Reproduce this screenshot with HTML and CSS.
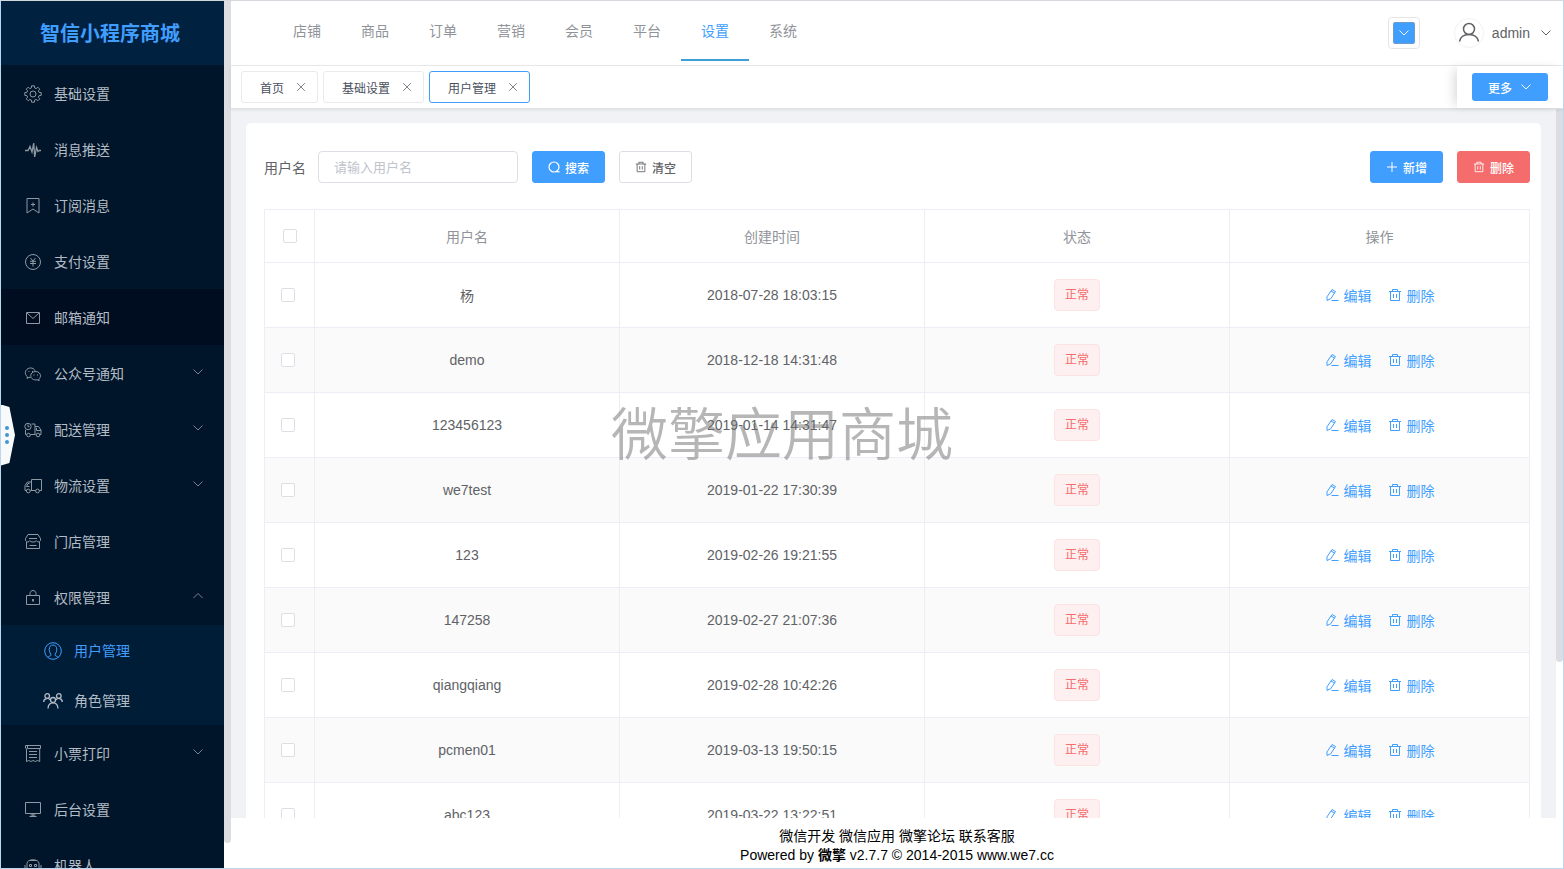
FILE: index.html
```
<!DOCTYPE html>
<html lang="zh-CN">
<head>
    <meta charset="UTF-8">
    <meta name="viewport" content="width=device-width, initial-scale=1.0">
    <title>用户管理 - 智信小程序商城</title>
    <link rel="stylesheet" href="styles.css">
</head>
<body>
    <!-- Icon sprite -->
    <svg class="sprite" aria-hidden="true">
        <symbol id="i-gear" viewBox="0 0 18 18"><path d="M17.2 7.6V10.4L15.1 10.6L14.4 12.2L15.8 13.8L13.8 15.8L12.2 14.4L10.6 15.1L10.4 17.2H7.6L7.4 15.1L5.8 14.4L4.2 15.8L2.2 13.8L3.6 12.2L2.9 10.6L.8 10.4V7.6L2.9 7.4L3.6 5.8L2.2 4.2L4.2 2.2L5.8 3.6L7.4 2.9L7.6 .8H10.4L10.6 2.9L12.2 3.6L13.8 2.2L15.8 4.2L14.4 5.8L15.1 7.4z"/><circle cx="9" cy="9" r="3"/></symbol>
        <symbol id="i-pulse" viewBox="0 0 18 18"><path d="M1 9.500H4L6 5.500 8 11 9.700 2 10.700 16 12.500 6.500 14 10.500 15.300 9.500H17" stroke-width="1.300"/></symbol>
        <symbol id="i-mark" viewBox="0 0 18 18"><path d="M3 1.500h12v14.500l-6-4-6 4zM9 5.500v4M7 7.500h4"/></symbol>
        <symbol id="i-yen" viewBox="0 0 18 18"><circle cx="9" cy="9" r="7.500"/><path d="M6.500 5 9 8l2.500-3M9 8v5.500M6 8.300h6M6 10.500h6"/></symbol>
        <symbol id="i-mail" viewBox="0 0 18 18"><path d="M2.500 3.500h13v11h-13zM3 4l6 5.500L15 4"/></symbol>
        <symbol id="i-wechat" viewBox="0 0 18 18"><path d="M6.500 12.500l-1.500-.2-2 1.200.3-2C.5 9.500 1 6 3 4.300c3-2.500 7.500-1.300 8.300 2.200"/><path d="M11.500 6.500c3 0 5 2 5 4.300 0 1.400-.7 2.400-1.700 3.200l.3 1.700-1.800-.9c-3.500.8-6.600-1.300-6.600-4 0-2.300 2-4.300 4.800-4.300z"/><path d="M4.500 6.500h1M8 6.500h1M9.500 10h1M13 10h1"/></symbol>
        <symbol id="i-delivery" viewBox="0 0 18 18"><circle cx="4" cy="5.500" r="3.200"/><path d="M4 3.500v2.200h1.500M1.500 9v4.500h1M6.500 13.500h5M7.500 3H11v10.500M11 5.500h3.500L17 9v4.500h-1M12.500 7v2.500H17"/><circle cx="4.500" cy="14" r="1.800"/><circle cx="14" cy="14" r="1.800"/></symbol>
        <symbol id="i-truck" viewBox="0 0 18 18"><path d="M7.500 2.500h10v11h-2M7.500 2.500V13.500M11.500 13.500H6.500M7.500 5H3.500L1 8.500v5h1M5.500 6.500H4L2.500 9.500h3"/><circle cx="4.300" cy="14" r="1.900"/><circle cx="13.500" cy="14" r="1.900"/></symbol>
        <symbol id="i-shop" viewBox="0 0 18 18"><path d="M4 1.500h10l2.500 4v2c-1 1.800-3.500 1.800-4.200.2-.8 1.800-5.800 1.800-6.600 0-.7 1.600-3.200 1.600-4.200-.2v-2zM2.500 9v6.500h13V9M5 5.500h8M5.500 12.500h7"/></symbol>
        <symbol id="i-lock" viewBox="0 0 18 18"><path d="M2.500 6.500h13v9h-13zM6 6.500V4.500c0-4 6-4 6 0v2"/><path d="M9 10v2.500" stroke-width="1.800"/></symbol>
        <symbol id="i-user" viewBox="0 0 18 18"><circle cx="9" cy="9" r="8.300"/><path d="M4 15.300c.3-1.300 3-1 3-2.300 0-1-1.800-2.500-1.800-5.500C5.200 4.500 6.800 3 9 3s3.800 1.500 3.800 4.500c0 3-1.800 4.500-1.800 5.500 0 1.300 2.700 1 3 2.300"/></symbol>
        <symbol id="i-group" viewBox="0 0 20 18"><g stroke-width="1.300"><circle cx="4.200" cy="4" r="2.300"/><circle cx="15.800" cy="4" r="2.300"/><circle cx="10" cy="8" r="2.500"/><path d="M.7 10c0-4 5-4.500 6.300-2M19.300 10c0-4-5-4.500-6.300-2M5 16.500c.5-7.500 9.500-7.500 10 0"/></g></symbol>
        <symbol id="i-receipt" viewBox="0 0 18 18"><path d="M1.500 3.500v-3h15v3h-13v-3M2.500 3.500v13l2.200-1 2.200 1 2.200-1 2.200 1 2.200-1 2.200 1v-13M5 6.500h8M5 9.500h8M5 12.500h8"/></symbol>
        <symbol id="i-monitor" viewBox="0 0 18 18"><path d="M1.500 1.500h15v11h-15zM9 12.500v3M5.500 15.500h7M6.500 14h5"/></symbol>
        <symbol id="i-robot" viewBox="0 0 18 18"><path d="M3 6.500c0-5 12-5 12 0v8H3zM1 8v4M17 8v4M5.500 12.500h7M6 3.500h6"/><path d="M5.500 7.500h2v2h-2zM10.500 7.500h2v2h-2z"/></symbol>
        <symbol id="i-down" viewBox="0 0 12 12"><path d="M1.500 3.500 6 8l4.500-4.500"/></symbol>
        <symbol id="i-up" viewBox="0 0 12 12"><path d="M1.500 8 6 3.500 10.500 8"/></symbol>
        <symbol id="i-close" viewBox="0 0 10 10"><path d="M1.200 1.200l7.600 7.600M8.800 1.200 1.200 8.800"/></symbol>
        <symbol id="i-search" viewBox="0 0 12 12"><circle cx="6" cy="6" r="5" stroke-width="1.200"/><path d="M8.500 10.800h3" stroke-width="1.200"/></symbol>
        <symbol id="i-plus" viewBox="0 0 12 12"><path d="M6 1v10M1 6h10"/></symbol>
        <symbol id="i-trash" viewBox="0 0 14 14"><path d="M1 3.500h12M4.500 3.500v-2h5v2M2.500 3.500v9h9v-9M5.500 6v4M8.500 6v4"/></symbol>
        <symbol id="i-edit" viewBox="0 0 14 14"><path d="M2 8.800 7 1.500l3.500 2-4.800 7.300L2 12.500zM6 3l3.500 2M6.500 12.500h7"/></symbol>
        <symbol id="i-avatar" viewBox="0 0 22 22"><g stroke-width="1.500"><circle cx="11" cy="7" r="5.500"/><path d="M1.500 19.500c1-5 4.500-7 9.500-7s8.500 2 9.500 7"/></g></symbol>
    </svg>

    <div class="app">
        <aside class="sidebar">
            <h1 class="logo">智信小程序商城</h1>
            <nav class="menu">
                <a href="#" class="menu-item"><svg class="icon"><use href="#i-gear"/></svg>基础设置</a>
                <a href="#" class="menu-item"><svg class="icon"><use href="#i-pulse"/></svg>消息推送</a>
                <a href="#" class="menu-item"><svg class="icon"><use href="#i-mark"/></svg>订阅消息</a>
                <a href="#" class="menu-item"><svg class="icon"><use href="#i-yen"/></svg>支付设置</a>
                <a href="#" class="menu-item hover"><svg class="icon"><use href="#i-mail"/></svg>邮箱通知</a>
                <button type="button" class="menu-item"><svg class="icon"><use href="#i-wechat"/></svg>公众号通知<svg class="arrow"><use href="#i-down"/></svg></button>
                <button type="button" class="menu-item"><svg class="icon"><use href="#i-delivery"/></svg>配送管理<svg class="arrow"><use href="#i-down"/></svg></button>
                <button type="button" class="menu-item"><svg class="icon"><use href="#i-truck"/></svg>物流设置<svg class="arrow"><use href="#i-down"/></svg></button>
                <a href="#" class="menu-item"><svg class="icon"><use href="#i-shop"/></svg>门店管理</a>
                <button type="button" class="menu-item"><svg class="icon"><use href="#i-lock"/></svg>权限管理<svg class="arrow"><use href="#i-up"/></svg></button>
                <div class="submenu">
                    <a href="#" class="menu-item active"><svg class="icon"><use href="#i-user"/></svg>用户管理</a>
                    <a href="#" class="menu-item"><svg class="icon icon-wide"><use href="#i-group"/></svg>角色管理</a>
                </div>
                <button type="button" class="menu-item"><svg class="icon"><use href="#i-receipt"/></svg>小票打印<svg class="arrow"><use href="#i-down"/></svg></button>
                <a href="#" class="menu-item"><svg class="icon"><use href="#i-monitor"/></svg>后台设置</a>
                <a href="#" class="menu-item"><svg class="icon"><use href="#i-robot"/></svg>机器人</a>
            </nav>
        </aside>
        <div class="side-scroll"></div>

        <div class="main">
            <header class="topbar">
                <nav class="topnav">
                    <a href="#">店铺</a>
                    <a href="#">商品</a>
                    <a href="#">订单</a>
                    <a href="#">营销</a>
                    <a href="#">会员</a>
                    <a href="#">平台</a>
                    <a href="#" class="active">设置</a>
                    <a href="#">系统</a>
                </nav>
                <button type="button" class="theme-picker" aria-label="主题颜色"><span><svg><use href="#i-down"/></svg></span></button>
                <button type="button" class="account">
                    <span class="avatar"><svg><use href="#i-avatar"/></svg></span>
                    admin
                    <svg class="caret"><use href="#i-down"/></svg>
                </button>
            </header>

            <div class="tabs">
                <div class="tab"><a href="#">首页</a><button type="button" aria-label="关闭"><svg><use href="#i-close"/></svg></button></div>
                <div class="tab"><a href="#">基础设置</a><button type="button" aria-label="关闭"><svg><use href="#i-close"/></svg></button></div>
                <div class="tab active"><a href="#">用户管理</a><button type="button" aria-label="关闭"><svg><use href="#i-close"/></svg></button></div>
                <div class="tabs-more">
                    <button type="button" class="more">更多<svg><use href="#i-down"/></svg></button>
                </div>
            </div>

            <div class="content">
                <div class="card-wrap">
                    <section class="card">
                        <form class="toolbar">
                            <label for="username">用户名</label>
                            <input type="text" id="username" placeholder="请输入用户名">
                            <button type="button" class="btn primary"><svg><use href="#i-search"/></svg>搜索</button>
                            <button type="button" class="btn"><svg><use href="#i-trash"/></svg>清空</button>
                            <button type="button" class="btn primary push"><svg><use href="#i-plus"/></svg>新增</button>
                            <button type="button" class="btn danger"><svg><use href="#i-trash"/></svg>删除</button>
                        </form>

                        <table class="grid">
                            <colgroup>
                                <col class="col-check">
                                <col>
                                <col>
                                <col>
                                <col class="col-action">
                            </colgroup>
                            <thead>
                                <tr>
                                    <th><input type="checkbox" aria-label="全选"></th>
                                    <th>用户名</th>
                                    <th>创建时间</th>
                                    <th>状态</th>
                                    <th>操作</th>
                                </tr>
                            </thead>
                            <tbody>
                                <tr>
                                    <td><input type="checkbox" aria-label="杨"></td>
                                    <td>杨</td>
                                    <td>2018-07-28 18:03:15</td>
                                    <td><span class="tag">正常</span></td>
                                    <td><div class="actions"><button type="button"><svg><use href="#i-edit"/></svg>编辑</button><button type="button"><svg><use href="#i-trash"/></svg>删除</button></div></td>
                                </tr>
                                <tr>
                                    <td><input type="checkbox" aria-label="demo"></td>
                                    <td>demo</td>
                                    <td>2018-12-18 14:31:48</td>
                                    <td><span class="tag">正常</span></td>
                                    <td><div class="actions"><button type="button"><svg><use href="#i-edit"/></svg>编辑</button><button type="button"><svg><use href="#i-trash"/></svg>删除</button></div></td>
                                </tr>
                                <tr>
                                    <td><input type="checkbox" aria-label="123456123"></td>
                                    <td>123456123</td>
                                    <td>2019-01-14 14:31:47</td>
                                    <td><span class="tag">正常</span></td>
                                    <td><div class="actions"><button type="button"><svg><use href="#i-edit"/></svg>编辑</button><button type="button"><svg><use href="#i-trash"/></svg>删除</button></div></td>
                                </tr>
                                <tr>
                                    <td><input type="checkbox" aria-label="we7test"></td>
                                    <td>we7test</td>
                                    <td>2019-01-22 17:30:39</td>
                                    <td><span class="tag">正常</span></td>
                                    <td><div class="actions"><button type="button"><svg><use href="#i-edit"/></svg>编辑</button><button type="button"><svg><use href="#i-trash"/></svg>删除</button></div></td>
                                </tr>
                                <tr>
                                    <td><input type="checkbox" aria-label="123"></td>
                                    <td>123</td>
                                    <td>2019-02-26 19:21:55</td>
                                    <td><span class="tag">正常</span></td>
                                    <td><div class="actions"><button type="button"><svg><use href="#i-edit"/></svg>编辑</button><button type="button"><svg><use href="#i-trash"/></svg>删除</button></div></td>
                                </tr>
                                <tr>
                                    <td><input type="checkbox" aria-label="147258"></td>
                                    <td>147258</td>
                                    <td>2019-02-27 21:07:36</td>
                                    <td><span class="tag">正常</span></td>
                                    <td><div class="actions"><button type="button"><svg><use href="#i-edit"/></svg>编辑</button><button type="button"><svg><use href="#i-trash"/></svg>删除</button></div></td>
                                </tr>
                                <tr>
                                    <td><input type="checkbox" aria-label="qiangqiang"></td>
                                    <td>qiangqiang</td>
                                    <td>2019-02-28 10:42:26</td>
                                    <td><span class="tag">正常</span></td>
                                    <td><div class="actions"><button type="button"><svg><use href="#i-edit"/></svg>编辑</button><button type="button"><svg><use href="#i-trash"/></svg>删除</button></div></td>
                                </tr>
                                <tr>
                                    <td><input type="checkbox" aria-label="pcmen01"></td>
                                    <td>pcmen01</td>
                                    <td>2019-03-13 19:50:15</td>
                                    <td><span class="tag">正常</span></td>
                                    <td><div class="actions"><button type="button"><svg><use href="#i-edit"/></svg>编辑</button><button type="button"><svg><use href="#i-trash"/></svg>删除</button></div></td>
                                </tr>
                                <tr>
                                    <td><input type="checkbox" aria-label="abc123"></td>
                                    <td>abc123</td>
                                    <td>2019-03-22 13:22:51</td>
                                    <td><span class="tag">正常</span></td>
                                    <td><div class="actions"><button type="button"><svg><use href="#i-edit"/></svg>编辑</button><button type="button"><svg><use href="#i-trash"/></svg>删除</button></div></td>
                                </tr>
                            </tbody>
                        </table>
                    </section>
                </div>
                <div class="content-scroll"></div>
            </div>

            <footer class="footer">
                <p><a href="#">微信开发</a> <a href="#">微信应用</a> <a href="#">微擎论坛</a> <a href="#">联系客服</a></p>
                <p>Powered by <b>微擎</b> v2.7.7 © 2014-2015 www.we7.cc</p>
            </footer>
        </div>
    </div>

    <!-- Drawer handle on the window edge -->
    <button type="button" class="handle" aria-label="展开"><i></i><i></i><i></i></button>
    <div class="watermark">微擎应用商城</div>
</body>
</html>
```
FILE: styles.css
```
* {
    margin: 0;
    padding: 0;
    box-sizing: border-box;
}

body {
    font-family: "Liberation Sans", "Noto Sans CJK SC", sans-serif;
    font-size: 14px;
    color: #606266;
    background: #fff;
}

a {
    color: inherit;
    text-decoration: none;
}

button {
    font: inherit;
    color: inherit;
    background: none;
    border: 0;
    cursor: pointer;
}

svg {
    fill: none;
    stroke: currentColor;
    stroke-width: 1;
    flex: none;
}

.sprite {
    display: none;
}

.app {
    display: flex;
    height: 100vh;
    border: 1px solid #b9d7ef;
    border-top-color: #d4d8dc;
    overflow: hidden;
}

/* Sidebar */
.sidebar {
    flex: none;
    width: 223px;
    background: #001529;
    color: #b3bcc5;
    overflow: hidden;
}

.logo {
    height: 64px;
    line-height: 66px;
    padding-right: 5px;
    text-align: center;
    font-size: 20px;
    font-weight: 700;
    color: #409eff;
    background: #002140;
}

.menu-item {
    display: flex;
    align-items: center;
    width: 100%;
    height: 56px;
    padding: 0 20px 0 23px;
    text-align: left;
}

.menu-item.hover {
    background: #000c20;
}

.icon {
    width: 18px;
    height: 18px;
    margin: 2px 12px 0 0;
    color: #8e99a4;
}

.icon-wide {
    width: 20px;
    margin: 2px 11px 0 -1px;
    color: #b3bcc5;
}

.arrow {
    width: 12px;
    height: 12px;
    margin: 0 0 2px auto;
    color: #77828e;
}

.submenu {
    background: #001d38;
}

.submenu .menu-item {
    height: 50px;
    padding-left: 43px;
}

.menu-item.active,
.menu-item.active .icon {
    color: #409eff;
}

.side-scroll {
    flex: none;
    width: 7px;
    margin-bottom: 25px;
    background: #dcdde0;
    border-radius: 0 0 4px 4px;
}

.main {
    flex: 1;
    min-width: 0;
    display: flex;
    flex-direction: column;
}

/* Top navigation */
.topbar {
    flex: none;
    display: flex;
    align-items: center;
    height: 65px;
    padding: 0 11px 0 42px;
    border-bottom: 1px solid #e8eaec;
}

.topnav {
    display: flex;
    align-self: flex-start;
    margin-right: auto;
    color: #909399;
}

.topnav a {
    height: 60px;
    line-height: 60px;
    padding: 0 20px;
}

.topnav a.active {
    color: #409eff;
    border-bottom: 2px solid #3f9fd8;
}

.theme-picker {
    width: 32px;
    height: 32px;
    padding: 4px;
    border: 1px solid #e6e6e6;
    border-radius: 4px;
    margin-right: 34px;
}

.theme-picker span {
    display: flex;
    align-items: center;
    justify-content: center;
    height: 22px;
    background: #409eff;
    border: 1px solid #6b9ccc;
    border-radius: 2px;
    color: #fff;
}

.theme-picker svg,
.more svg {
    width: 12px;
    height: 12px;
}

.account {
    display: flex;
    align-items: center;
}

.avatar {
    display: flex;
    align-items: center;
    justify-content: center;
    width: 30px;
    height: 30px;
    margin-right: 8px;
    border: 1px solid #f2f2f2;
    border-radius: 50%;
}

.avatar svg {
    width: 22px;
    height: 22px;
}

.caret {
    width: 12px;
    height: 12px;
    margin-left: 10px;
}

/* Page tabs */
.tabs {
    flex: none;
    position: relative;
    display: flex;
    align-items: center;
    gap: 5px;
    height: 43px;
    padding-left: 10px;
    font-size: 12px;
    color: #495060;
    border-bottom: 1px solid #dfe2e5;
    box-shadow: 0 1px 3px rgba(0, 0, 0, 0.08);
}

.tab {
    display: flex;
    align-items: center;
    gap: 12px;
    height: 32px;
    padding: 0 11px 0 18px;
    border: 1px solid #e8eaec;
    border-radius: 3px;
}

.tab.active {
    border-color: #409eff;
}

.tab button,
.tab svg {
    display: block;
    width: 10px;
    height: 10px;
}

.tab button {
    color: #80848f;
}

.tabs-more {
    display: flex;
    align-items: center;
    height: 100%;
    margin-left: auto;
    padding: 0 15px;
    background: #fff;
    box-shadow: -6px 0 10px -3px rgba(0, 0, 0, 0.14);
}

.more {
    display: flex;
    align-items: center;
    gap: 8px;
    height: 28px;
    padding: 0 16px;
    font-weight: 500;
    color: #fff;
    background: #409eff;
    border-radius: 3px;
}

/* Content */
.content {
    flex: 1;
    min-height: 0;
    display: flex;
    overflow: hidden;
}

.card-wrap {
    flex: 1;
    min-width: 0;
    padding: 14px 15px;
    background: #f0f2f5;
}

.card {
    padding: 28px 11px 28px 18px;
    background: #fff;
    border-radius: 5px;
}

.content-scroll {
    flex: none;
    width: 7px;
    height: 78%;
    background: #dcdde0;
    border-radius: 0 0 4px 4px;
}

.toolbar {
    display: flex;
    align-items: center;
    gap: 14px;
    margin-bottom: 26px;
}

.toolbar label {
    margin-right: -2px;
}

.toolbar input {
    width: 200px;
    height: 32px;
    padding: 0 15px;
    font: inherit;
    font-size: 13px;
    border: 1px solid #dcdfe6;
    border-radius: 4px;
}

.toolbar input::placeholder {
    color: #c0c4cc;
}

.btn {
    display: flex;
    align-items: center;
    gap: 5px;
    height: 32px;
    padding: 0 15px;
    font-size: 12px;
    font-weight: 500;
    border: 1px solid #dcdfe6;
    border-radius: 3px;
}

.btn svg {
    width: 12px;
    height: 12px;
}

.btn.primary {
    color: #fff;
    background: #409eff;
    border-color: #409eff;
}

.btn.danger {
    color: #fff;
    background: #f56c6c;
    border-color: #f56c6c;
}

.btn.push {
    margin-left: auto;
}

/* Data table */
.grid {
    width: 100%;
    table-layout: fixed;
    border-collapse: collapse;
}

.col-check {
    width: 50px;
}

.col-action {
    width: 300px;
}

.grid th,
.grid td {
    border: 1px solid #ebeef5;
    text-align: center;
    vertical-align: middle;
}

.grid th {
    height: 53px;
    font-weight: 400;
    color: #909399;
}

.grid td {
    height: 65px;
}

.grid td:first-child {
    padding-right: 4px;
}

.grid tbody tr:nth-child(even) {
    background: #fafafa;
}

.grid input {
    appearance: none;
    display: block;
    width: 14px;
    height: 14px;
    margin: 0 auto;
    background: #fff;
    border: 1px solid #dcdfe6;
    border-radius: 2px;
}

.tag {
    display: inline-block;
    height: 32px;
    line-height: 30px;
    padding: 0 10px;
    font-size: 12px;
    color: #f56c6c;
    background: #fef0f0;
    border: 1px solid #fde2e2;
    border-radius: 4px;
    vertical-align: middle;
}

.actions {
    display: flex;
    justify-content: center;
    gap: 16px;
    color: #409eff;
}

.actions button {
    display: flex;
    align-items: center;
    gap: 5px;
}

.actions svg {
    width: 14px;
    height: 14px;
}

.footer {
    flex: none;
    padding: 9px 0 3px;
    line-height: 19px;
    text-align: center;
    color: #000;
    background: #fff;
}

/* Overlays */
.handle {
    position: fixed;
    left: 1px;
    top: calc(50% - 30px);
    display: flex;
    flex-direction: column;
    align-items: center;
    justify-content: center;
    gap: 3px;
    width: 14px;
    height: 61px;
    padding-right: 2px;
    background: #f7f9fb;
    clip-path: polygon(0 0, 60% 4%, 100% 50%, 60% 96%, 0 100%);
}

.handle i {
    width: 4px;
    height: 4px;
    border-radius: 50%;
    background: #4296d2;
}

.watermark {
    position: fixed;
    top: 50%;
    left: 50%;
    transform: translate(-50%, -50%);
    font-size: 57px;
    font-weight: 350;
    line-height: 1;
    white-space: nowrap;
    color: rgba(110, 110, 110, 0.5);
    pointer-events: none;
}
```
